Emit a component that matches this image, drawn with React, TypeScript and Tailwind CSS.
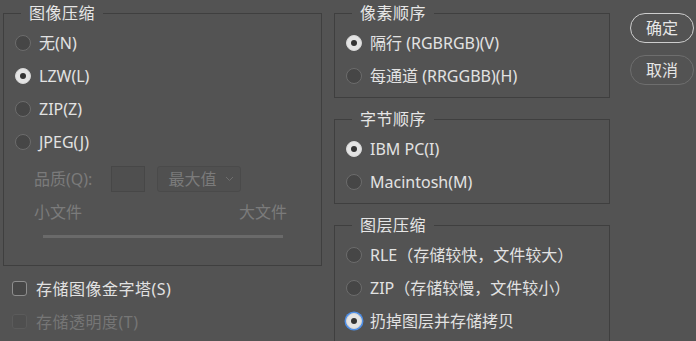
import React from "react";

const FONT = '"Noto Sans", "Noto Sans CJK SC", sans-serif';

function Radio({ checked = false, focus = false }: { checked?: boolean; focus?: boolean }) {
  if (checked) {
    return (
      <span
        className={
          focus
            ? "flex h-4 w-4 shrink-0 items-center justify-center rounded-full border border-[#d6d6d6] bg-[#e4e4e4] ring-[1.5px] ring-[#4f8fe6]"
            : "flex h-4 w-4 shrink-0 items-center justify-center rounded-full border border-[#d6d6d6] bg-[#e4e4e4]"
        }
      >
        <span className="h-[6px] w-[6px] rounded-full bg-[#343434]" />
      </span>
    );
  }
  return <span className="h-4 w-4 shrink-0 rounded-full border border-[#6c6c6c] bg-[#464646]" />;
}

function RadioRow({ label, checked, focus }: { label: React.ReactNode; checked?: boolean; focus?: boolean }) {
  return (
    <div className="flex h-[33px] items-center gap-2 pl-[11px] text-[#e2e2e2]">
      <Radio checked={checked} focus={focus} />
      <span className="whitespace-nowrap">{label}</span>
    </div>
  );
}

function Group({
  title,
  className,
  children,
}: {
  title: string;
  className: string;
  children: React.ReactNode;
}) {
  return (
    <fieldset className={"border border-[#3f3f3f] " + className}>
      <legend className="ml-[17px] px-2 text-[16px] leading-[26px] tracking-[0.5px] text-[#e6e6e6]">{title}</legend>
      {children}
    </fieldset>
  );
}

export default function App() {
  return (
    <div
      className="flex h-[341px] w-[696px] overflow-hidden bg-[#535353] pl-[3px] text-[16px] leading-[22px]"
      style={{ fontFamily: FONT }}
    >
      {/* Left column */}
      <div className="flex w-[319px] shrink-0 flex-col">
        <Group title="图像压缩" className="w-[319px] pb-[27px]">
          <RadioRow label="无(N)" />
          <RadioRow label="LZW(L)" checked />
          <RadioRow label="ZIP(Z)" />
          <RadioRow label="JPEG(J)" />
          <div className="flex h-[42px] items-center pl-[30px] text-[#7b7b7b]">
            <span className="whitespace-nowrap">品质(Q):</span>
            <span className="ml-[19px] h-[26px] w-[34px] border border-[#474747] bg-[#4f4f4f]" />
            <span className="ml-[12px] flex h-[26px] w-[84px] items-center justify-between rounded-[3px] border border-[#4a4a4a] bg-[#505050] pl-[10px] pr-[6px]">
              <span>最大值</span>
              <svg width="9" height="6" viewBox="0 0 9 6" fill="none">
                <path d="M1 1l3.5 3.5L8 1" stroke="#6e6e6e" strokeWidth="1" />
              </svg>
            </span>
          </div>
          <div className="flex h-[24px] w-[283px] items-center justify-between pl-[30px] text-[#7b7b7b]">
            <span>小文件</span>
            <span>大文件</span>
          </div>
          <div className="ml-[39px] mt-[11px] h-[3px] w-[240px] bg-[#6a6a6a]" />
        </Group>
        <div className="mt-[6px] flex h-[33px] items-center gap-[9px] pl-[9px] text-[#e2e2e2]">
          <span className="h-[15px] w-[15px] rounded-[3px] border border-[#8e8e8e] bg-[#474747]" />
          <span className="tracking-[0.5px]">存储图像金字塔(S)</span>
        </div>
        <div className="flex h-[33px] items-center gap-[9px] pl-[9px] text-[#767676]">
          <span className="h-[15px] w-[15px] rounded-[3px] border border-[#5b5b5b] bg-[#4f4f4f]" />
          <span className="tracking-[0.5px]">存储透明度(T)</span>
        </div>
      </div>

      {/* Right column */}
      <div className="ml-[12px] flex w-[276px] shrink-0 flex-col gap-[8px]">
        <Group title="像素顺序" className="w-[276px] pb-[5px]">
          <RadioRow label="隔行 (RGBRGB)(V)" checked />
          <RadioRow label="每通道 (RRGGBB)(H)" />
        </Group>
        <Group title="字节顺序" className="w-[276px] pb-[5px]">
          <RadioRow label="IBM PC(I)" checked />
          <RadioRow label="Macintosh(M)" />
        </Group>
        <Group title="图层压缩" className="w-[276px] pb-[10px]">
          <RadioRow label="RLE（存储较快，文件较大）" />
          <RadioRow label="ZIP（存储较慢，文件较小）" />
          <RadioRow label="扔掉图层并存储拷贝" checked focus />
        </Group>
      </div>

      {/* Buttons */}
      <div className="ml-[20px] flex flex-col gap-[12px] pt-[13px]">
        <button className="flex h-[30px] w-[64px] items-center justify-center rounded-full border-[1.5px] border-[#cdcdcd] text-[#e6e6e6]">
          确定
        </button>
        <button className="flex h-[30px] w-[64px] items-center justify-center rounded-full border-[1.5px] border-[#6e6e6e] text-[#e6e6e6]">
          取消
        </button>
      </div>
    </div>
  );
}
